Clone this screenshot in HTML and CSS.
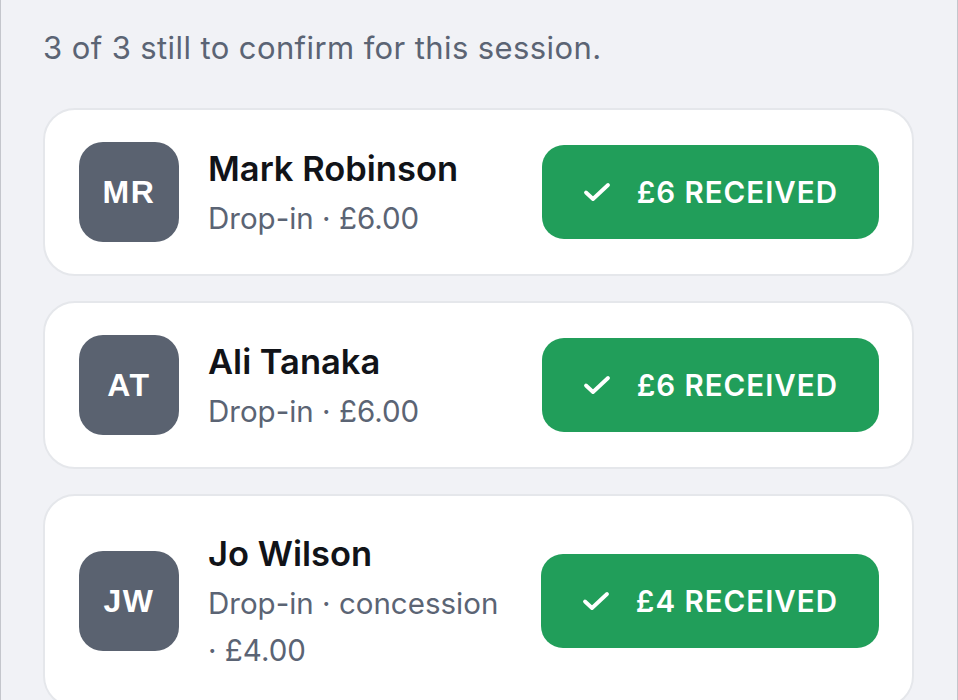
FILE: index.html
```html
<!DOCTYPE html>
<html lang="en">
<head>
    <meta charset="UTF-8">
    <meta name="viewport" content="width=device-width, initial-scale=1.0">
    <title>Payments to confirm</title>
    <link rel="stylesheet" href="styles.css">
</head>
<body>
    <div class="page">
        <p class="intro">3 of 3 still to confirm for this session.</p>

        <div class="attendee-list">
            <div class="attendee">
                <div class="avatar">MR</div>
                <div class="info">
                    <div class="name">Mark Robinson</div>
                    <div class="meta">Drop-in · £6.00</div>
                </div>
                <button class="paid-btn">
                    <svg class="tick" viewBox="0 0 28 22" width="28" height="22"><path d="M3 11.5l7 6.5L25 4" fill="none" stroke="currentColor" stroke-width="3.8" stroke-linecap="round" stroke-linejoin="round"/></svg>
                    <span>£6 RECEIVED</span>
                </button>
            </div>

            <div class="attendee">
                <div class="avatar">AT</div>
                <div class="info">
                    <div class="name">Ali Tanaka</div>
                    <div class="meta">Drop-in · £6.00</div>
                </div>
                <button class="paid-btn">
                    <svg class="tick" viewBox="0 0 28 22" width="28" height="22"><path d="M3 11.5l7 6.5L25 4" fill="none" stroke="currentColor" stroke-width="3.8" stroke-linecap="round" stroke-linejoin="round"/></svg>
                    <span>£6 RECEIVED</span>
                </button>
            </div>

            <div class="attendee">
                <div class="avatar">JW</div>
                <div class="info">
                    <div class="name">Jo Wilson</div>
                    <div class="meta">Drop-in · concession · £4.00</div>
                </div>
                <button class="paid-btn">
                    <svg class="tick" viewBox="0 0 28 22" width="28" height="22"><path d="M3 11.5l7 6.5L25 4" fill="none" stroke="currentColor" stroke-width="3.8" stroke-linecap="round" stroke-linejoin="round"/></svg>
                    <span>£4 RECEIVED</span>
                </button>
            </div>
        </div>
    </div>
</body>
</html>
```

FILE: styles.css
```css
body {
    margin: 0;
    font-family: Inter, 'Noto Sans', Arial, sans-serif;
    background: #f1f2f6;
}

.page {
    min-height: 100vh;
    box-sizing: border-box;
    padding: 20px 43px 40px 42px;
    border-left: 1px solid #c4c6cc;
    border-right: 1px solid #c4c6cc;
    background: #f1f2f6;
}

.intro {
    margin: 0 0 32px;
    font-size: 31px;
    line-height: 56px;
    letter-spacing: 0.4px;
    color: #5b6474;
}

.attendee-list {
    display: flex;
    flex-direction: column;
    gap: 25px;
}

.attendee {
    display: flex;
    align-items: center;
    gap: 29px;
    padding: 32px 33px 32px 34px;
    background: white;
    border: 2px solid #e5e7eb;
    border-radius: 32px;
}

.avatar {
    flex-shrink: 0;
    width: 100px;
    height: 100px;
    border-radius: 24px;
    background: #5a6270;
    color: white;
    display: flex;
    align-items: center;
    justify-content: center;
    font-family: 'Liberation Sans', Arial, sans-serif;
    font-weight: bold;
    font-size: 32px;
    letter-spacing: 1.5px;
}

.info {
    flex: 1;
    min-width: 0;
}

.name {
    font-size: 34.5px;
    font-weight: 600;
    line-height: 52px;
    color: #111318;
}

.meta {
    font-size: 29.5px;
    line-height: 47px;
    color: #5b6474;
}

.paid-btn {
    flex-shrink: 0;
    display: flex;
    align-items: center;
    gap: 26px;
    height: 94px;
    padding: 0 41px;
    border: none;
    border-radius: 22px;
    background: #219e5a;
    color: white;
    font-family: inherit;
    font-size: 29.5px;
    font-weight: 600;
    letter-spacing: 1px;
    cursor: pointer;
}
```
